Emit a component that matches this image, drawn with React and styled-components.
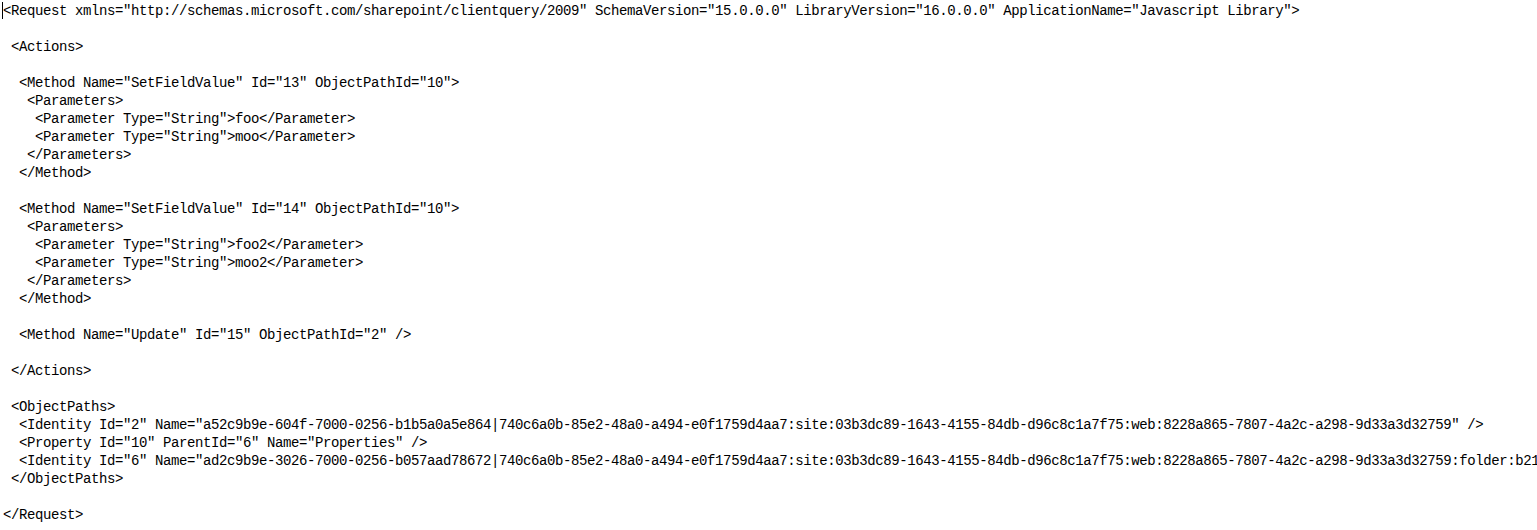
import React from "react";
import styled, { createGlobalStyle } from "styled-components";

const Global = createGlobalStyle`
  html, body { margin: 0; padding: 0; background: #fff; overflow: hidden; }
`;

const Editor = styled.div`
  position: relative;
  width: 1537px;
  height: 530px;
  overflow: hidden;
  background: #ffffff;
  padding: 2px 0 0 3px;
  box-sizing: border-box;
`;

const Caret = styled.span`
  position: absolute;
  left: 2px;
  top: 2px;
  width: 1px;
  height: 17px;
  background: #000;
`;

const Line = styled.div`
  font-family: "Liberation Mono", "DejaVu Sans Mono", monospace;
  font-size: 14px;
  letter-spacing: -0.4px;
  line-height: 18px;
  height: 18px;
  color: #000;
  white-space: pre;
`;

const lines = [
  `<Request xmlns="http://schemas.microsoft.com/sharepoint/clientquery/2009" SchemaVersion="15.0.0.0" LibraryVersion="16.0.0.0" ApplicationName="Javascript Library">`,
  ``,
  ` <Actions>`,
  ``,
  `  <Method Name="SetFieldValue" Id="13" ObjectPathId="10">`,
  `   <Parameters>`,
  `    <Parameter Type="String">foo</Parameter>`,
  `    <Parameter Type="String">moo</Parameter>`,
  `   </Parameters>`,
  `  </Method>`,
  ``,
  `  <Method Name="SetFieldValue" Id="14" ObjectPathId="10">`,
  `   <Parameters>`,
  `    <Parameter Type="String">foo2</Parameter>`,
  `    <Parameter Type="String">moo2</Parameter>`,
  `   </Parameters>`,
  `  </Method>`,
  ``,
  `  <Method Name="Update" Id="15" ObjectPathId="2" />`,
  ``,
  ` </Actions>`,
  ``,
  ` <ObjectPaths>`,
  `  <Identity Id="2" Name="a52c9b9e-604f-7000-0256-b1b5a0a5e864|740c6a0b-85e2-48a0-a494-e0f1759d4aa7:site:03b3dc89-1643-4155-84db-d96c8c1a7f75:web:8228a865-7807-4a2c-a298-9d33a3d32759" />`,
  `  <Property Id="10" ParentId="6" Name="Properties" />`,
  `  <Identity Id="6" Name="ad2c9b9e-3026-7000-0256-b057aad78672|740c6a0b-85e2-48a0-a494-e0f1759d4aa7:site:03b3dc89-1643-4155-84db-d96c8c1a7f75:web:8228a865-7807-4a2c-a298-9d33a3d32759:folder:b21`,
  ` </ObjectPaths>`,
  ``,
  `</Request>`,
];

export default function App() {
  return (
    <>
      <Global />
      <Editor>
        <Caret />
        {lines.map((l, i) => (
          <Line key={i}>{l}</Line>
        ))}
      </Editor>
    </>
  );
}
